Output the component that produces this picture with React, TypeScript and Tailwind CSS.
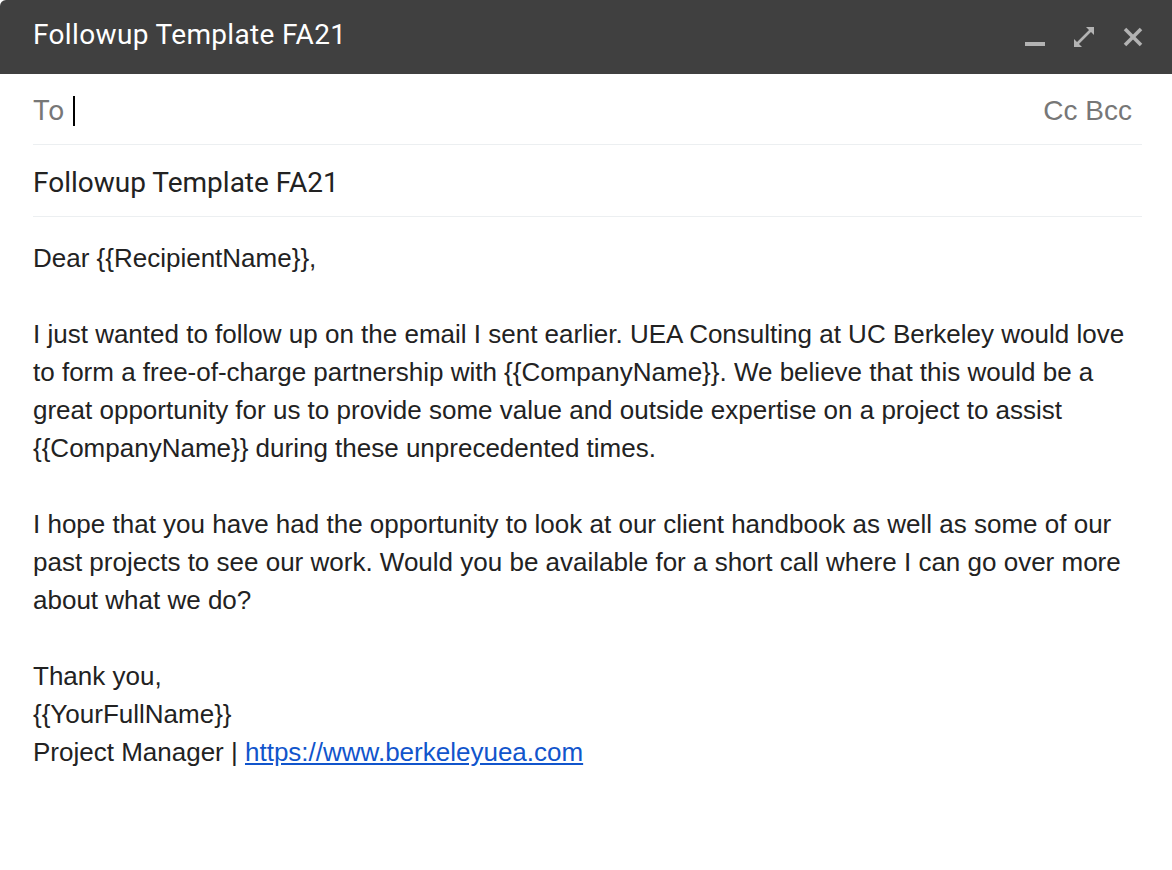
import React from 'react';

const body = "font-['Liberation_Sans',Arial,sans-serif]";
const roboto = "font-['Roboto',sans-serif]";

const MinimizeIcon = () => (
  <svg width="24" height="24" viewBox="0 0 24 24" fill="#b3b3b3">
    <rect x="2" y="17" width="20" height="4" />
  </svg>
);

const ExpandIcon = () => (
  <svg width="24" height="24" viewBox="0 0 24 24" fill="#b3b3b3">
    <polygon points="14,2 22,2 22,10" />
    <polygon points="2,14 2,22 10,22" />
    <line x1="5" y1="19" x2="19" y2="5" stroke="#b3b3b3" strokeWidth="2.6" />
  </svg>
);

const CloseIcon = () => (
  <svg width="24" height="24" viewBox="0 0 24 24" stroke="#b3b3b3" strokeWidth="3.6">
    <line x1="4" y1="4" x2="20" y2="20" />
    <line x1="20" y1="4" x2="4" y2="20" />
  </svg>
);

const paragraphs: string[][] = [
  ['Dear {{RecipientName}},'],
  [
    'I just wanted to follow up on the email I sent earlier. UEA Consulting at UC Berkeley would love',
    'to form a free-of-charge partnership with {{CompanyName}}. We believe that this would be a',
    'great opportunity for us to provide some value and outside expertise on a project to assist',
    '{{CompanyName}} during these unprecedented times.',
  ],
  [
    'I hope that you have had the opportunity to look at our client handbook as well as some of our',
    'past projects to see our work. Would you be available for a short call where I can go over more',
    'about what we do?',
  ],
];

export default function App() {
  return (
    <div className="w-[1172px] h-[870px] bg-white overflow-hidden">
      <div className="h-[74px] bg-[#404040] rounded-tl-[6px] flex items-center pl-[33px] pr-[27px]">
        <span className={`${roboto} text-[28px] text-white tracking-[0.35px] pb-[4px]`}>
          Followup Template FA21
        </span>
        <div className="ml-auto flex items-center gap-[25px]">
          <MinimizeIcon />
          <ExpandIcon />
          <CloseIcon />
        </div>
      </div>

      <div className="ml-[33px] mr-[30px]">
        <div className="h-[71px] border-b border-[#eceff1] flex items-center pr-[10px] pt-[4px]">
          <span className={`${roboto} text-[28px] text-[#777]`}>To</span>
          <span className="ml-[9px] w-[2px] h-[30px] bg-black" />
          <span className={`${body} text-[28px] text-[#777] ml-auto`}>Cc Bcc</span>
        </div>
        <div className="h-[72px] border-b border-[#eceff1] flex items-center pt-[4px]">
          <span className={`${roboto} text-[28px] text-[#222]`}>Followup Template FA21</span>
        </div>
      </div>

      <div className={`${body} pl-[33px] pt-[22px] text-[26px] leading-[38px] text-[#222] whitespace-nowrap`}>
        {paragraphs.map((lines, i) => (
          <div key={i} className="mb-[38px]">
            {lines.map((l, j) => (
              <div key={j}>{l}</div>
            ))}
          </div>
        ))}
        <div>Thank you,</div>
        <div>{'{{YourFullName}}'}</div>
        <div>
          Project Manager |{' '}
          <a href="#" className="text-[#1155cc] underline">
            https://www.berkeleyuea.com
          </a>
        </div>
      </div>
    </div>
  );
}
